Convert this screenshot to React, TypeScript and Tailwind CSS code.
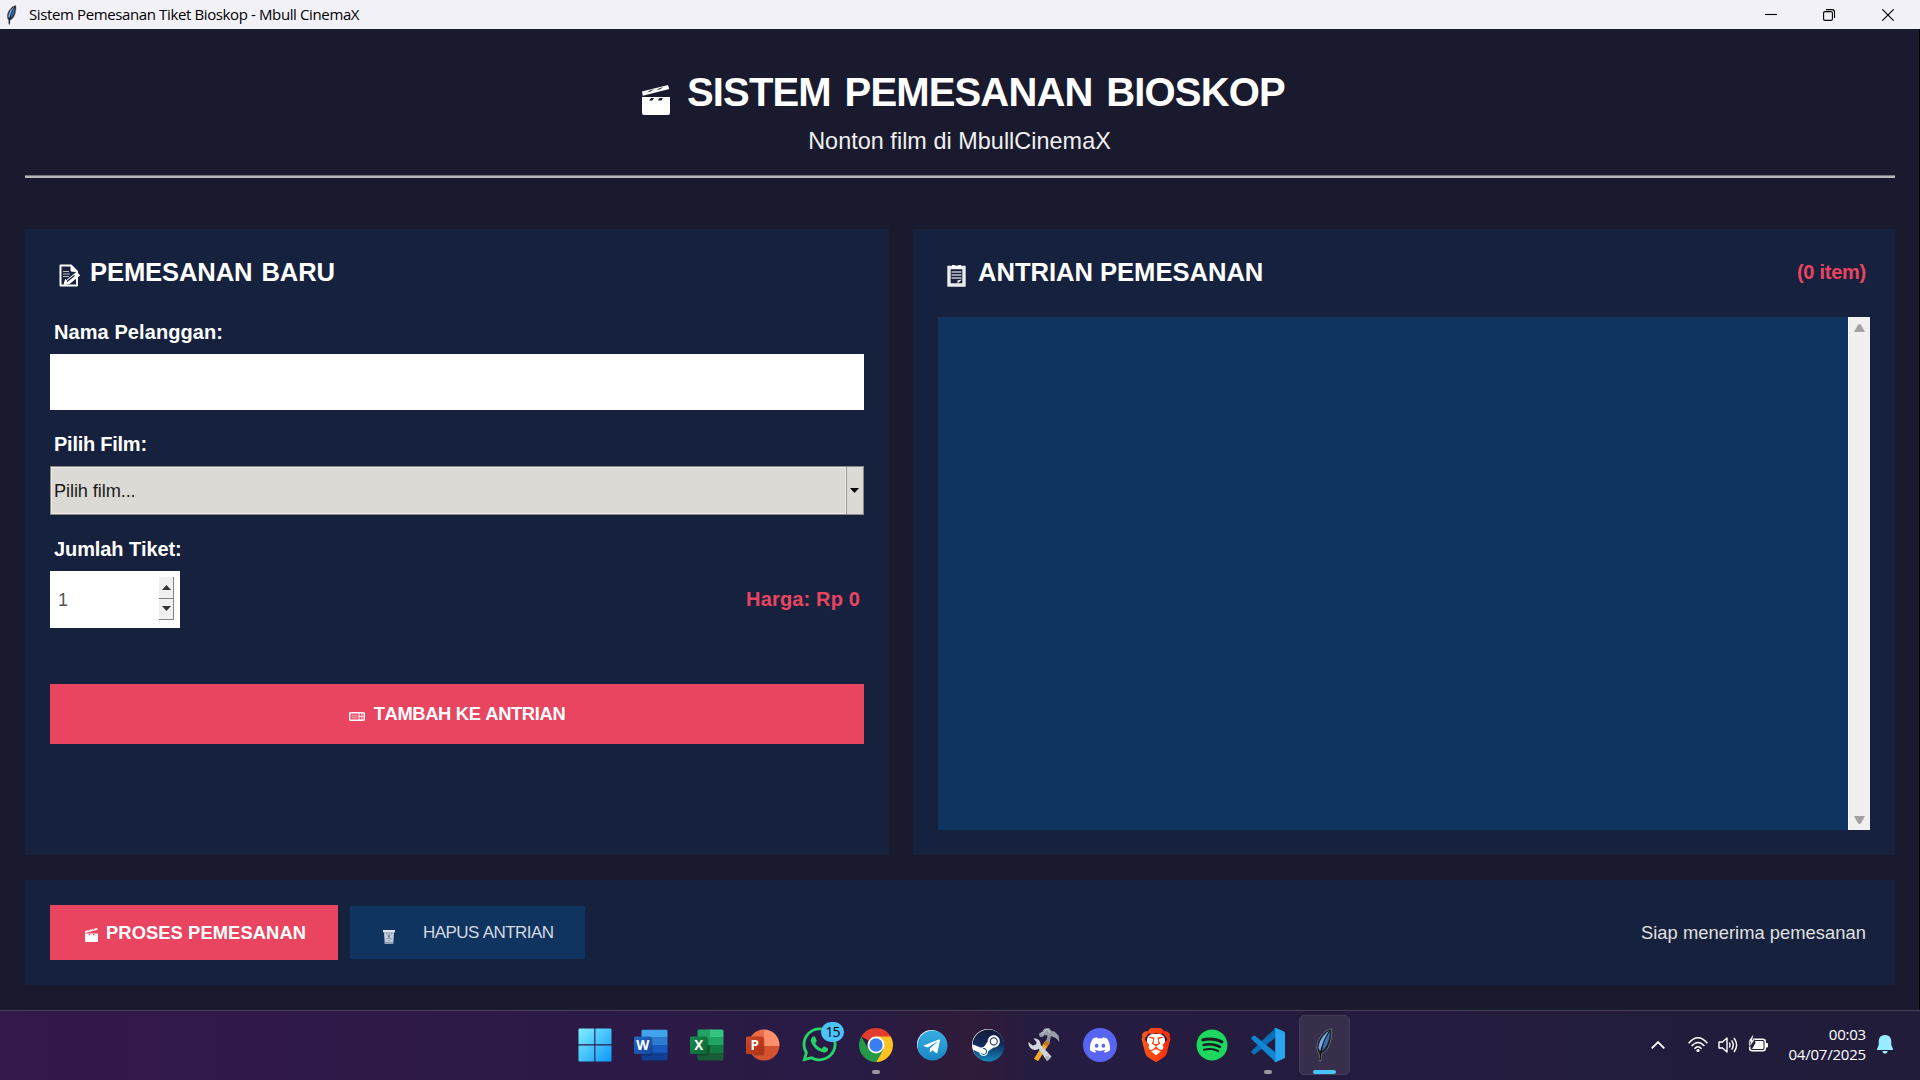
import type { ReactNode } from "react";
import { FaDiscord, FaSpotify, FaSteam, FaTelegram, FaWhatsapp } from "react-icons/fa";
import { SiBrave } from "react-icons/si";

function Clapper({ className }: { className: string }) {
  return (
    <svg className={className} viewBox="0 0 28 30" fill="currentColor" preserveAspectRatio="none">
      <path
        fillRule="evenodd"
        d="M0 6.500 26 0l1.300 4L.8 10.800ZM5 7.500l3.500-.9L12 4.300 8.500 5.200ZM14.500 5.200 18 4.300 21.500 2 18 2.900ZM0 12h28v16q0 2-2 2H2q-2 0-2-2ZM7 15.500h3.500l1.500-2.500H9ZM16 15.500h3.500l1.500-2.500h-3.500Z"
      />
    </svg>
  );
}

function Memo() {
  return (
    <svg className="h-[23px] w-[22px] shrink-0" viewBox="0 0 22 23" fill="none" stroke="#fff">
      <path d="M1.500 1.500h10.500L18 7.500v14H1.500Z" strokeWidth="2" strokeLinejoin="round" fill="#17213d" />
      <path d="M12 1.500V7l6 .8Z" fill="#fff" />
      <path d="M4 7.500h6M4 10h7M4 12.500h6" strokeWidth="1" opacity=".7" />
      <path d="M9 18 19.500 9.500" strokeWidth="5" />
      <path d="m5 20.500 1.500-5 4 4Z" fill="#fff" />
      <path d="m8 17.500 7.500-6" stroke="#17213d" strokeWidth="1.200" />
    </svg>
  );
}

function Clipboard() {
  return (
    <svg className="h-[22px] w-[19px] shrink-0" viewBox="0 0 19 22" fill="none">
      <path d="M2 2.500h15v17.500H2Z" stroke="#e9ebee" strokeWidth="3.400" fill="#17213d" />
      <path d="M5 0h2l2.500 1L12 0h2v4H5Z" fill="#fff" />
      <path d="M4.500 7h10M4.500 10h10M4.500 13h10" stroke="#fff" strokeWidth="1.400" opacity=".75" />
      <path d="M10.500 18.500v-3l4.500-1Z" fill="#fff" />
    </svg>
  );
}

function Ticket() {
  return (
    <svg className="h-[9px] w-4 shrink-0" viewBox="0 0 16 9" fill="none" stroke="#fff">
      <rect x=".7" y=".7" width="14.600" height="7.600" rx="1" strokeWidth="1.400" />
      <path d="M3 3h5v3H3Z" strokeWidth=".8" opacity=".5" fill="#fff" fillOpacity=".5" />
      <path d="M10 1v7" />
      <path d="M10 4.500h5M12.800 1v7" opacity=".8" />
    </svg>
  );
}

function Trash() {
  return (
    <svg className="h-[14px] w-3 shrink-0" viewBox="0 0 12 13" preserveAspectRatio="none">
      <path d="M0 0h12v2.200H0Z" fill="#e4e6ea" />
      <path d="M1 2h10l-.8 11H1.800Z" fill="#c8cfd8" />
      <path d="m3 3 6 6M9 3 3 9M6 3v7" stroke="#35557c" strokeWidth=".8" strokeDasharray="1.200 .8" />
      <path d="M1.700 11h8.600l-.2 2H1.900Z" fill="#8fa0b5" />
    </svg>
  );
}

function Feather({ className }: { className: string }) {
  return (
    <svg className={className} viewBox="0 0 18 34">
      <path d="M16.500.8c.8 6-.7 14-3.500 19-1.800 3.200-4.500 5.200-6.500 5.700L6 33H4.800L4 25.500C.6 22 1.600 14 5 9.500 8 4.500 12 1.500 16.500.8Z" fill="#1c2027" stroke="#77797f" strokeWidth=".8" />
      <path d="M14 3C8.500 6 4 13 3.500 20l1.600 3L9 13Z" fill="#78aae3" />
      <path d="M14.800 3C15 10 12.500 18.500 7 23L9.500 12Z" fill="#3c6fb0" />
      <path d="M14.500 3.500C9.500 10 6.500 17 5 32" fill="none" stroke="#0b0d12" strokeWidth="1" />
    </svg>
  );
}

function OfficeTile({ letter, colors, badge }: { letter: string; colors: string[]; badge: string[] }) {
  return (
    <svg className="h-[34px] w-[34px]" viewBox="0 0 34 34">
      <defs>
        <linearGradient id={"tile" + letter} x1="0" y1="0" x2="1" y2="1">
          <stop stopColor={badge[0]} />
          <stop offset="1" stopColor={badge[1]} />
        </linearGradient>
        <clipPath id={"clip" + letter}>
          {letter === "P" ? <circle cx="18" cy="17" r="15.500" /> : <rect x="7.500" y="1.500" width="26" height="31" rx="1.500" />}
        </clipPath>
      </defs>
      <g clipPath={"url(#clip" + letter + ")"}>
        {letter === "W" && colors.map((c, i) => <rect key={i} x="7" y={1.5 + i * 7.75} width="27" height="8" fill={c} />)}
        {letter === "X" && (
          <>
            <path d="M7 1h14v24H7Z" fill={colors[0]} />
            <path d="M20 1h14v8H20Z" fill={colors[1]} />
            <path d="M20 9h14v8H20Z" fill={colors[2]} />
            <path d="M20 17h14v8H20Z" fill={colors[3]} />
            <path d="M7 25h27v8H7ZM7 17h13v8H7Z" fill={colors[4]} />
          </>
        )}
        {letter === "P" && (
          <>
            <path d="M0 0h18v18H0Z" fill={colors[0]} />
            <path d="M18 0h16v18H18Z" fill={colors[1]} />
            <path d="M0 18h34v16H0Z" fill={colors[2]} />
          </>
        )}
        <rect x="7" y="9.500" width="11.500" height="18" rx="1.500" fill="#000" opacity=".22" />
      </g>
      <rect y="8.500" width="17.500" height="17.500" rx="1.500" fill={"url(#tile" + letter + ")"} />
      <text x="8.700" y="21.900" textAnchor="middle" fill="#fff" fontFamily="Open Sans, sans-serif" fontWeight="700" fontSize="13.500">
        {letter}
      </text>
    </svg>
  );
}

function WindowsLogo() {
  return (
    <svg className="h-[34px] w-[34px]" viewBox="0 0 34 34">
      <defs>
        <linearGradient id="win" x1="0" y1="0" x2="34" y2="34" gradientUnits="userSpaceOnUse">
          <stop stopColor="#83f0ff" />
          <stop offset="1" stopColor="#0a97fb" />
        </linearGradient>
      </defs>
      <path d="M1.500.5H16.300V16.300H.5V1.500q0-1 1-1ZM17.400.5H32.500q1 0 1 1V16.300H17.400ZM.5 17.500H16.300V33.500H1.500q-1 0-1-1ZM17.400 17.500H33.500V32.500q0 1-1 1H17.400Z" fill="url(#win)" />
    </svg>
  );
}

function ChromeLogo() {
  return (
    <svg className="h-[34px] w-[34px]" viewBox="0 0 34 34">
      <path d="M17 17 2.280 8.500A17 17 0 0 1 31.720 8.500Z" fill="#e33b2e" />
      <path d="M17 8.500H31.720A17 17 0 0 1 17 34L24.360 21.250Z" fill="#fcc21f" />
      <path d="M17 34A17 17 0 0 1 2.280 8.500L9.640 21.250 17 25.500 24.360 21.250Z" fill="#249a48" />
      <circle cx="17" cy="17" r="8.500" fill="#fff" />
      <circle cx="17" cy="17" r="6.700" fill="#3b7df0" />
    </svg>
  );
}

function ToolsLogo() {
  return (
    <svg className="h-[34px] w-[32px]" viewBox="0 0 32 34" fill="none">
      <path d="M19.500 14 8 32" stroke="#f2a52c" strokeWidth="5" />
      <path d="m20.300 13-3 4.500" stroke="#c07a18" strokeWidth="4.500" />
      <path d="m21.500 7-1.700 7" stroke="#8d9299" strokeWidth="3.500" />
      <path d="M11.500 8.500 11 5.500l3-1.500 2.500-3.500 4.500-.5 2.500 3 3 .5 4 4 1 7q-2.500-4.500-6-5.500l-6-1.500-3-.5q-1.500 3-5 1.500Z" fill="#989ea7" />
      <path d="M13 5.500q3 .5 5-4l2.500.500 1.500 3" stroke="#c9cdd3" strokeWidth="1" />
      <path d="m9 18.500 3-2.500L23.500 28.500 19 33Z" fill="#cdd3d5" />
      <path d="m20 27.500 2.500 2.500-3 3-3-3.500Z" fill="#a9b3b4" />
      <path d="M5.500 10.500c4-.5 7.500 2 7 6.500s-4.500 6-7.500 4.500S0 17.500.5 14l4 3.500 3.500-1 .5-2.500Z" fill="#d2d6d9" />
    </svg>
  );
}

function SteamLogo() {
  return (
    <div className="grid h-8 w-8 place-items-center rounded-full bg-white">
      <svg className="absolute h-0 w-0">
        <defs>
          <linearGradient id="steam" x1="0" y1="0" x2="0" y2="1">
            <stop stopColor="#151b38" />
            <stop offset=".45" stopColor="#12295a" />
            <stop offset="1" stopColor="#1388bd" />
          </linearGradient>
        </defs>
      </svg>
      <FaSteam className="h-[33px] w-[33px] shrink-0" fill="url(#steam)" />
    </div>
  );
}

function TelegramLogo() {
  return (
    <div className="grid h-[29px] w-[29px] place-items-center rounded-full bg-white">
      <svg className="absolute h-0 w-0">
        <defs>
          <linearGradient id="tg" x1="0" y1="0" x2="0" y2="1">
            <stop stopColor="#36aee2" />
            <stop offset="1" stopColor="#1b86c6" />
          </linearGradient>
        </defs>
      </svg>
      <FaTelegram className="h-[31px] w-[31px] shrink-0" fill="url(#tg)" />
    </div>
  );
}

function BraveLogo() {
  return (
    <div className="relative grid h-[34px] w-[34px] place-items-center">
      <div className="absolute h-[22px] w-[18px] rounded-md bg-white" />
      <svg className="absolute h-0 w-0">
        <defs>
          <linearGradient id="brave" x1="0" y1="0" x2="1" y2="0">
            <stop stopColor="#fb5a1c" />
            <stop offset="1" stopColor="#fa2a0a" />
          </linearGradient>
        </defs>
      </svg>
      <SiBrave className="relative h-[34px] w-[34px]" fill="url(#brave)" />
    </div>
  );
}

function CodeLogo() {
  return (
    <svg className="h-[34px] w-[34px]" viewBox="0 0 34 34">
      <path d="M24.500 0v9.500L4 26.200q-.8.500-1.500 0L.6 24.500q-.9-.9 0-1.800L24.500 0Z" fill="#0a6fb8" />
      <path d="M24.500 34v-9.500L4 7.800q-.8-.5-1.500 0L.6 9.500q-.9.900 0 1.800L24.500 34Z" fill="#0f86d2" />
      <path d="M25 0 33 3.500q1 .5 1 1.600V28.900q0 1.100-1 1.600L25 34q-1.300.2-2-.9.900.4 1.200-1V2Q23.900.6 23 .9 23.700-.2 25 0Z" fill="#27a5f1" />
    </svg>
  );
}

function TaskItem({ children, running, active }: { children: ReactNode; running?: boolean; active?: boolean }) {
  return (
    <div className="flex w-[56.1px] justify-center">
      <div className={"relative flex h-[60px] w-[51px] items-center justify-center rounded-[5px] " + (active ? "border border-[#443b5a] bg-[#382f4d]" : "")}>
        {children}
        {running && <span className="absolute bottom-[1px] left-[21.5px] h-1 w-2 rounded-full bg-[#9b95a6]" />}
        {active && <span className="absolute bottom-0 left-[13px] h-1 w-[23px] rounded-full bg-[#4cc2ff]" />}
      </div>
    </div>
  );
}

function TitleBar() {
  return (
    <header className="flex h-[29px] shrink-0 items-center bg-[#f3f1f8] font-['Open_Sans',sans-serif] text-black">
      <Feather className="ml-[6px] h-[20px] w-[11px]" />
      <span className="ml-[12px] text-[15px] tracking-[-0.38px]">Sistem Pemesanan Tiket Bioskop - Mbull CinemaX</span>
      <svg className="mr-[26px] ml-auto h-3 w-[129px]" viewBox="0 0 129 12" fill="none" stroke="#000" strokeWidth="1.100">
        <path d="M0 5.500h12" />
        <rect x="58.600" y="2.600" width="8.800" height="8.800" rx="1.300" />
        <path d="M61 .6h6q2.500 0 2.500 2.500v6" />
        <path d="m117.300.3 11.400 11.400m0-11.400L117.300 11.700" />
      </svg>
    </header>
  );
}

function OrderForm() {
  return (
    <section className="flex w-[864px] flex-col bg-[#16213e] px-[25px] pt-[25px]">
      <h2 className="flex h-9 items-center pl-[9px] text-[25.6px] font-bold">
        <span className="mt-[7px]"><Memo /></span>
        <span className="ml-[9px] tracking-[-0.12px] [word-spacing:2px]">PEMESANAN BARU</span>
      </h2>
      <label className="mt-[28px] flex h-[28px] items-center pl-[4px] text-[20px] font-bold tracking-[0.08px]">Nama Pelanggan:</label>
      <div className="mt-[8px] h-[56px] bg-white" />
      <label className="mt-[20px] flex h-[28px] items-center pl-[4px] text-[20px] font-bold tracking-[-0.25px]">Pilih Film:</label>
      <div className="mt-[8px] flex h-[49px] border-[1.500px] border-[#8d8a85] bg-[#dcdad5]">
        <div className="flex flex-1 items-center border border-[#eeebe7] pt-[2px] pl-[2px] text-[18.2px] tracking-[-0.1px] text-[#1c1c1c]">Pilih film...</div>
        <div className="flex w-[17px] items-center justify-center border-l border-[#9e9a91] pr-[1px]">
          <svg className="h-[5px] w-[9px]" viewBox="0 0 9 5"><path d="M0 0h9L4.500 5Z" /></svg>
        </div>
      </div>
      <label className="mt-[20px] flex h-[28px] items-center pl-[4px] text-[20px] font-bold tracking-[-0.1px]">Jumlah Tiket:</label>
      <div className="mt-[8px] flex h-[57px] items-center justify-between">
        <div className="flex h-full w-[130px] items-center justify-between bg-white pr-[6px] pl-[8px] text-[18px] text-[#555]">
          <span className="pt-[2px]">1</span>
          <div className="mb-[2px] flex h-[43px] w-[15px] flex-col">
            {[0, 1].map((i) => (
              <div key={i} className="flex flex-1 items-center justify-center border-r border-b border-[#828282] bg-[#f0f0f0]">
                <svg className={i ? "h-[5px] w-[9px] rotate-180" : "h-[5px] w-[9px]"} viewBox="0 0 9 5"><path d="M0 5h9L4.500 0Z" fill="#333" /></svg>
              </div>
            ))}
          </div>
        </div>
        <span className="pr-1 pb-[2px] text-[20px] font-bold tracking-[0.15px] text-[#e94560]">Harga: Rp 0</span>
      </div>
      <button className="mt-[56px] flex h-[60px] items-center justify-center bg-[#e94560] text-[18.33px] font-bold">
        <span className="mt-[4px]"><Ticket /></span>
        <span className="ml-[9px] tracking-[-0.35px]">TAMBAH KE ANTRIAN</span>
      </button>
    </section>
  );
}

function QueuePanel() {
  return (
    <section className="flex w-[982px] flex-col bg-[#16213e] px-[25px] pt-[25px] pb-[25px]">
      <div className="flex h-9 items-center justify-between pr-1 pl-[9px]">
        <h2 className="flex items-center text-[25.6px] font-bold">
          <span className="mt-[7px]"><Clipboard /></span>
          <span className="ml-[12px] tracking-[-0.03px]">ANTRIAN PEMESANAN</span>
        </h2>
        <span className="text-[20px] font-bold tracking-[-0.25px] text-[#e94560]">(0 item)</span>
      </div>
      <div className="mt-[27px] flex flex-1 bg-[#0f3460]">
        <div className="ml-auto flex w-[22px] flex-col items-center justify-between border-l border-white bg-[#f0f0f0] pt-[7px] pb-[6px]">
          <svg className="h-2 w-[11px]" viewBox="0 0 11 8"><path d="M0 8h11L7 .8Q5.500-.8 4 .8Z" fill="#a3a3a3" /></svg>
          <svg className="h-2 w-[11px] rotate-180" viewBox="0 0 11 8"><path d="M0 8h11L7 .8Q5.500-.8 4 .8Z" fill="#a3a3a3" /></svg>
        </div>
      </div>
    </section>
  );
}

function ActionBar() {
  return (
    <section className="mt-[25px] flex h-[105px] items-center bg-[#16213e] px-[25px]">
      <button className="flex h-[55px] w-[288px] items-center bg-[#e94560] pl-[35px] text-[18.33px] font-bold">
        <Clapper className="mt-[5px] h-[14px] w-[13px]" />
        <span className="ml-[8px] tracking-[0.09px]">PROSES PEMESANAN</span>
      </button>
      <button className="ml-3 flex h-[53px] w-[235px] items-center bg-[#0f3460] pl-[33px] text-[17px] text-[#d5dae2]">
        <span className="mt-[8px]"><Trash /></span>
        <span className="mt-[1px] ml-[28px] tracking-[-0.58px]">HAPUS ANTRIAN</span>
      </button>
      <span className="ml-auto pr-1 text-[18.33px] tracking-[0.04px] text-[#e0e0e0]">Siap menerima pemesanan</span>
    </section>
  );
}

function Tray() {
  return (
    <div className="ml-auto flex items-center pr-[27px] text-white">
      <svg className="h-2 w-[14px]" viewBox="0 0 14 8" fill="none" stroke="#fff" strokeWidth="1.800"><path d="m.7 7.300 6.300-6.200 6.300 6.200" /></svg>
      <svg className="ml-[23px] h-4 w-5" viewBox="0 0 20 16" fill="none" stroke="#fff" strokeWidth="1.500">
        <path d="M.6 6.300Q10-4.800 19.400 6.300" />
        <path d="M3.600 9Q10 1.800 16.400 9M6.500 11.700q3.500-4 7 0" />
        <circle cx="10" cy="13.500" r="1.600" fill="#fff" stroke="none" />
      </svg>
      <svg className="ml-[10px] h-[18px] w-5" viewBox="0 0 20 18" fill="none" stroke="#fff" strokeWidth="1.400">
        <path d="M1 6h3.500L9 2v14l-4.500-4H1Z" strokeLinejoin="round" />
        <path d="M11.300 6.500q1.500 2.500 0 5M13.600 4.300q3.300 4.700 0 9.400M16 2q5.200 7 0 14" />
      </svg>
      <svg className="-mt-[3px] ml-[10px] h-[17px] w-5" viewBox="0 0 20 17">
        <rect x="1.700" y="4.200" width="15.600" height="11.500" rx="2.500" fill="none" stroke="#fff" strokeWidth="1.500" />
        <path d="M18 8h1q1 0 1 1v2.500q0 1-1 1h-1Z" fill="#fff" />
        <path d="M7 6h7.500q1 0 1 1v6q0 1-1 1H4L7.500 8Z" fill="#fff" />
        <path d="M4.500 0 .3 6.800h2.200L1.500 12 6.800 5H4.300L5.500.3Z" fill="#fff" stroke="#231c3b" strokeWidth=".6" />
      </svg>
      <div className="-ml-[2px] w-[100px] pb-[2px] text-right font-['Open_Sans',sans-serif] text-[15px] leading-[20px] tracking-[-0.2px]">
        <div>00:03</div>
        <div>04/07/2025</div>
      </div>
      <svg className="ml-[11px] h-[19px] w-4" viewBox="0 0 16 19" fill="#99ebff">
        <path d="M8 0c4 0 6.300 2.800 6.300 6.500V10L16 14v1H0v-1l1.700-4V6.500C1.700 2.800 4 0 8 0ZM5.200 16h5.600q-.6 2.700-2.800 2.700T5.200 16Z" />
      </svg>
    </div>
  );
}

function Taskbar() {
  return (
    <footer className="flex h-[70px] shrink-0 items-center border-t border-[#4a4056] bg-[linear-gradient(90deg,#33184a_0,#2c1a46_30%,#281b44_45%,#2d1b3b_49%,#301b3a_50.500%,#261c41_54%,#231c3e_75%,#211c3a_100%)] pb-[2px] pl-[567px]">
      <TaskItem><WindowsLogo /></TaskItem>
      <TaskItem><OfficeTile letter="W" colors={["#41a5ee", "#2b7cd3", "#185abd", "#103f91"]} badge={["#2368c4", "#1446a0"]} /></TaskItem>
      <TaskItem><OfficeTile letter="X" colors={["#21a366", "#33c481", "#21a366", "#107c41", "#185c37"]} badge={["#18884f", "#0b6631"]} /></TaskItem>
      <TaskItem><OfficeTile letter="P" colors={["#ed6c47", "#ff8f6b", "#d35230"]} badge={["#ca4c28", "#b02c14"]} /></TaskItem>
      <TaskItem>
        <FaWhatsapp className="h-[39px] w-[39px] shrink-0 text-[#25d366]" />
        <span className="absolute top-[7px] left-[27px] flex h-[20px] w-[23px] items-center justify-center rounded-full bg-[#4cc2ff] font-['Open_Sans',sans-serif] text-[14px] tracking-[-1px] text-black">15</span>
      </TaskItem>
      <TaskItem running><ChromeLogo /></TaskItem>
      <TaskItem><TelegramLogo /></TaskItem>
      <TaskItem><SteamLogo /></TaskItem>
      <TaskItem><ToolsLogo /></TaskItem>
      <TaskItem>
        <div className="grid h-[34px] w-[34px] place-items-center rounded-full bg-[#5865f2]"><FaDiscord className="h-[22px] w-[22px] text-white" /></div>
      </TaskItem>
      <TaskItem><BraveLogo /></TaskItem>
      <TaskItem>
        <div className="mr-[1px] flex h-[31px] w-[31px] items-center justify-center rounded-full bg-[#1c1a20]"><FaSpotify className="h-[32px] w-[32px] shrink-0 text-[#1ed760]" /></div>
      </TaskItem>
      <TaskItem running><CodeLogo /></TaskItem>
      <TaskItem active><Feather className="h-[34px] w-[18px]" /></TaskItem>
      <Tray />
    </footer>
  );
}

export default function App() {
  return (
    <div className="flex h-[1080px] w-[1920px] flex-col overflow-hidden bg-[#1a1a2e] font-['Liberation_Sans',Arial,sans-serif] text-white [font-kerning:none]">
      <TitleBar />
      <main className="flex flex-1 flex-col border-r border-black pr-[24px] pl-[25px]">
        <h1 className="mt-[38px] flex h-[50px] items-center pl-[617px] text-[40px] font-bold whitespace-nowrap">
          <Clapper className="mt-[16px] h-[30px] w-[28px]" />
          <span className="ml-[17px] tracking-[-0.85px] [word-spacing:3.500px]">SISTEM PEMESANAN BIOSKOP</span>
        </h1>
        <p className="mt-[9px] flex h-[32px] items-center justify-center pr-[1px] text-[23.4px] tracking-[0.04px] text-[#f0f0f0]">Nonton film di MbullCinemaX</p>
        <div className="mt-[17px] h-[3px] border-t border-[#77777b] bg-[#b8b8b8]" />
        <div className="mt-[51px] flex h-[626px] gap-[24px]">
          <OrderForm />
          <QueuePanel />
        </div>
        <ActionBar />
      </main>
      <Taskbar />
    </div>
  );
}
